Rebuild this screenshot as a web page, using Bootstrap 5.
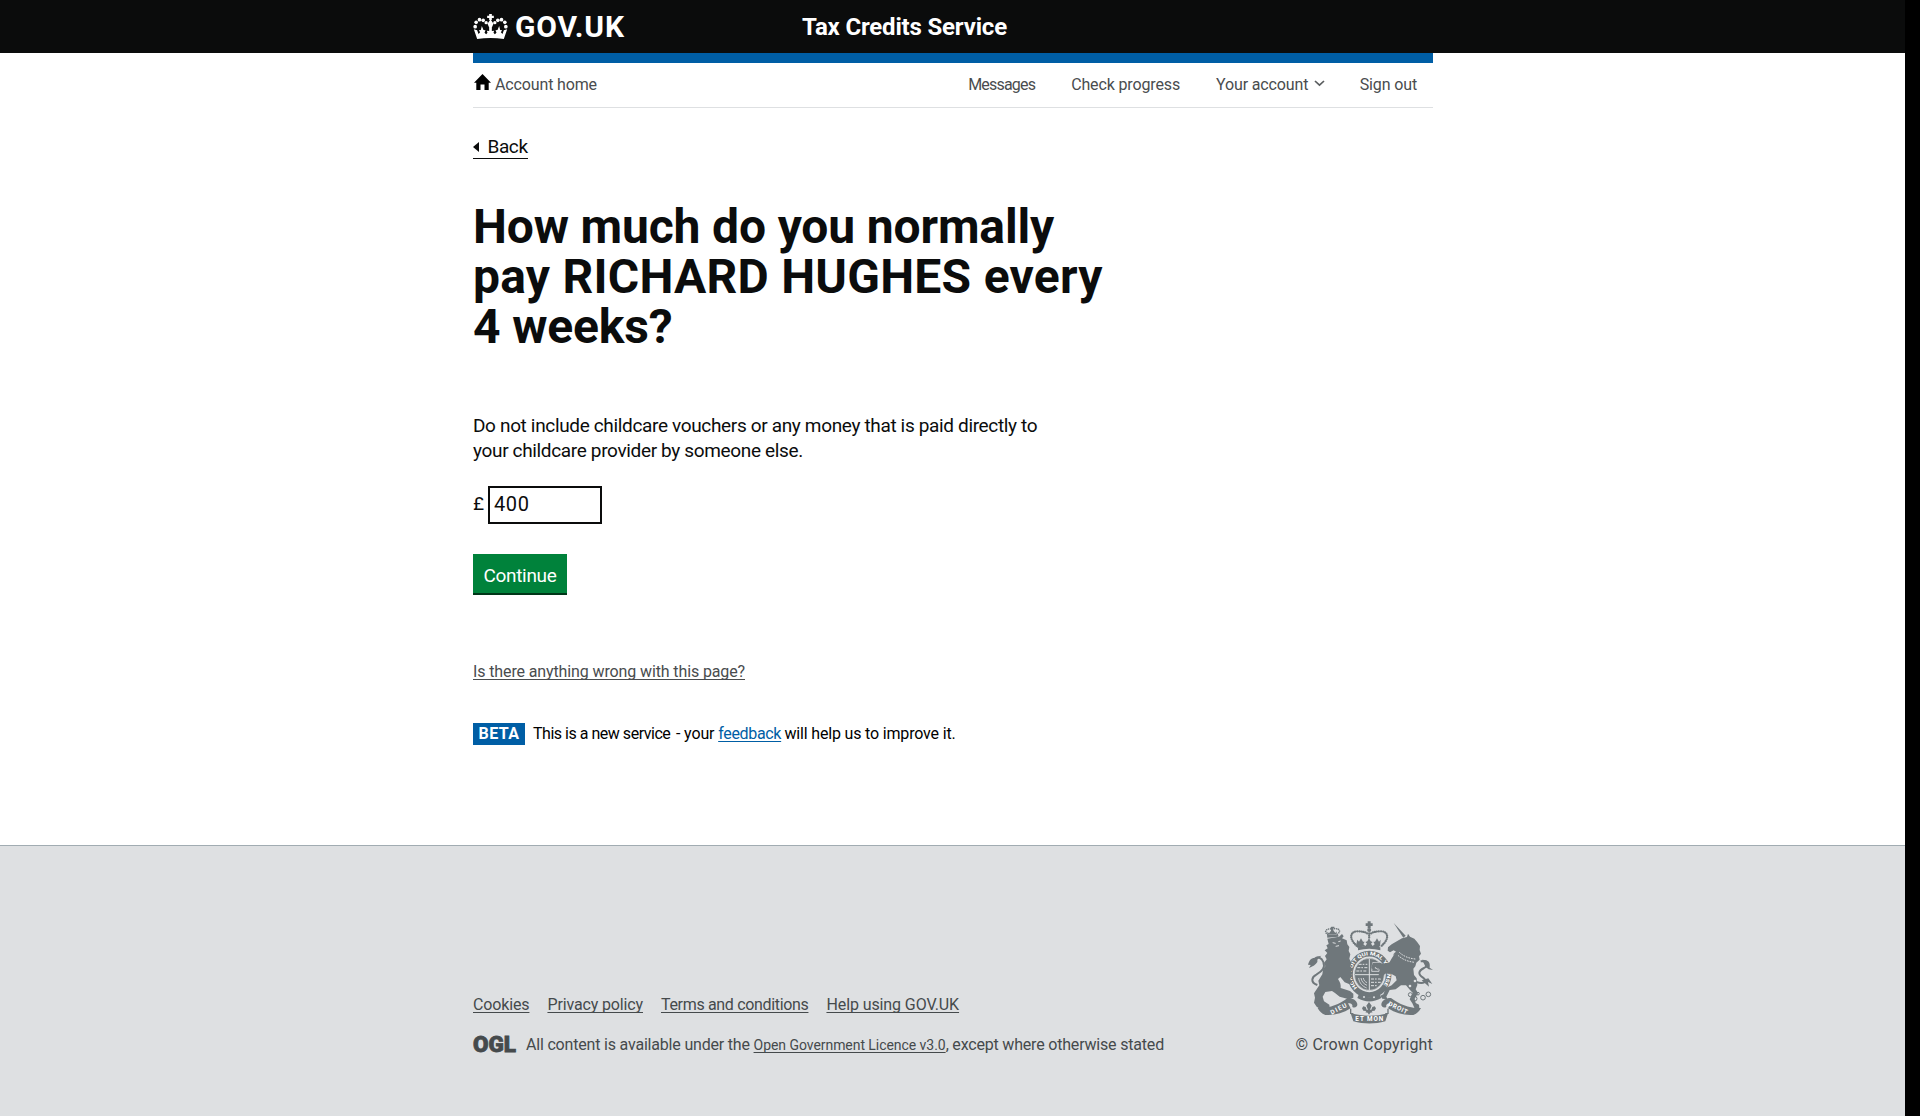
<!DOCTYPE html>
<html lang="en">
<head>
<meta charset="utf-8">
<meta name="viewport" content="width=device-width, initial-scale=1">
<title>Tax Credits Service</title>
<link href="https://cdn.jsdelivr.net/npm/bootstrap@5.3.0/dist/css/bootstrap.min.css" rel="stylesheet">
<style>
  body { background: #000; color: #0b0c0c; font: 400 16px/20px Roboto, "Liberation Sans", sans-serif; letter-spacing: -.14px; }
  .page { width: calc(100% - 15px); min-height: 1116px; }
  .wrap { width: 960px; margin: 0 0 0 calc(50% - 479.5px); }
  .site-header { background: #0b0c0c; height: 53px; color: #fff; font-weight: 700; }
  .brand { width: 329px; font-size: 30px; line-height: 36px; letter-spacing: .85px; gap: 7px; }
  .service-name { font-size: 24px; line-height: 30px; letter-spacing: -.18px; }
  .account-nav { border-top: 10px solid #005ea5; border-bottom: 1px solid #dee0e2; height: 55px; padding: 9px 16px 0 0; line-height: 25px; }
  .account-nav a { color: #494c4e; text-decoration: none; }
  .account-links { gap: 36px; }
  .chevron { margin: 8px -1px 0 5.5px; }
  .home-icon { margin: 2px 4px 0 1px; }
  .tight-8 { letter-spacing: -.8px; }
  .back-link { margin-top: 26px; height: 25px; padding-top: 1px; font-size: 19px; line-height: 23px; letter-spacing: -.4px; color: #0b0c0c; border-bottom: 1px solid #0b0c0c; text-decoration: none; gap: 8.5px; }
  .question { margin: 43px 0 0; width: 640px; font-size: 48px; line-height: 50px; font-weight: 700; letter-spacing: -.15px; }
  .question .wide-line { letter-spacing: .26px; }
  .hint { margin: 61px 0 0; width: 600px; font-size: 19px; line-height: 25px; letter-spacing: -.345px; }
  .amount { margin-top: 23px; font-size: 19px; gap: 4px; }
  .amount .form-control { width: 114px; height: 38px; padding: 0 4px 3px; border: 2px solid #0b0c0c; border-radius: 0; font-size: 20px; letter-spacing: .7px; color: #0b0c0c; }
  .amount label { padding-bottom: 2px; }
  .btn-continue { margin-top: 30px; padding: 9px 10px 5px; border: 0; border-radius: 0; background: #00823b; color: #fff; box-shadow: 0 2px 0 #003618; font-size: 19px; line-height: 25px; letter-spacing: -.32px; width: 94px; white-space: nowrap; }
  .help-link { margin-top: 69px; color: #494c4e; letter-spacing: -.12px; }
  .page a.ul { text-decoration: underline 1px; text-underline-offset: 2px; text-decoration-skip-ink: none; }
  .beta-bar { margin-top: 41px; line-height: 22px; color: #000; }
  .beta-tag { width: 52px; background: #005ea5; color: #fff; font-weight: 700; letter-spacing: .45px; text-align: center; margin-right: 8px; }
  .beta-lead { letter-spacing: -.48px; margin-right: -2px; }
  .beta-bar .feedback { color: #005ea5; letter-spacing: -.32px; }
  .beta-tail { margin-left: -.5px; letter-spacing: -.17px; }
  .site-footer { background: #dee0e2; border-top: 1px solid #a1acb2; color: #454a4c; padding-bottom: 61px; height: 271px; }
  .site-footer a { color: #454a4c; }
  .footer-links { gap: 18px; margin-bottom: 20px; }
  .licence { letter-spacing: -.19px; }
  .licence a { font-size: 14px; letter-spacing: -.05px; }
  .crest { margin-bottom: 11px; }
  .copyright { letter-spacing: .17px; }
  .crest text, .ogl text { font-family: Roboto, sans-serif; font-weight: 700; letter-spacing: 0; }
  .ogl text { font-weight: 900; }
  .ogl { overflow: visible; }
</style>
</head>
<body>
<div class="page bg-white d-flex flex-column">
  <header class="site-header">
    <div class="wrap h-100 d-flex align-items-center">
      <div class="brand d-flex align-items-center">
        <svg width="35" height="25" viewBox="24 24 104 75" fill="#fff" aria-hidden="true">
          <path d="M72 24h8v5h6v7h-6v6h-8v-6h-6v-7h6zM76 40l9 13-6 14h-6l-6-14z"/>
          <circle cx="63" cy="50" r="5"/><circle cx="89" cy="50" r="5"/>
          <circle cx="54" cy="43" r="5.500"/><circle cx="98" cy="43" r="5.500"/>
          <circle cx="43" cy="41" r="5.500"/><circle cx="109" cy="41" r="5.500"/>
          <circle cx="33" cy="49" r="5.500"/><circle cx="119" cy="49" r="5.500"/>
          <circle cx="30" cy="62" r="5.500"/><circle cx="122" cy="62" r="5.500"/>
          <path d="M26 70l10 3 4 11 5-5-4-6 6-1 3-12 5 12 6 1-3 7 5 5 4-5-2-6 7 1v-10h8v10l7-1-2 6 4 5 5-5-3-7 6-1 5-12 3 12 6 1-4 6 5 5 4-11 10-3-10 29c-26-4-54-4-80 0z"/>
        </svg>
        <span>GOV.UK</span>
      </div>
      <div class="service-name">Tax Credits Service</div>
    </div>
  </header>

  <main class="wrap flex-grow-1 d-flex flex-column align-items-start">
    <nav class="account-nav d-flex align-items-start justify-content-between align-self-stretch">
      <a href="#" class="d-flex align-items-start">
        <svg class="home-icon" width="17" height="16" viewBox="0 0 17 16" aria-hidden="true"><path d="M8.500 0L17 8.800h-2.300V16h-4.200v-5.500h-4V16H2.300V8.800H0z" fill="#000"/></svg>
        Account home
      </a>
      <div class="account-links d-flex">
        <a href="#" class="tight-8">Messages</a>
        <a href="#">Check progress</a>
        <a href="#" class="d-flex align-items-start">Your account <svg width="11" height="7" viewBox="0 0 11 7" class="chevron" fill="none" stroke="#5a5d5f" stroke-width="1.700" aria-hidden="true"><path d="M1 1l4.500 4.200L10 1"/></svg></a>
        <a href="#">Sign out</a>
      </div>
    </nav>

    <a href="#" class="back-link d-flex align-items-center">
      <svg width="6" height="10" viewBox="0 0 6 10" aria-hidden="true"><path d="M6 0v10L0 5z" fill="#0b0c0c"/></svg>
      Back
    </a>

    <h1 class="question">How much do you normally<br><span class="wide-line">pay RICHARD HUGHES every</span><br>4 weeks?</h1>

    <p class="hint">Do not include childcare vouchers or any money that is paid directly to<br>your childcare provider by someone else.</p>

    <div class="amount d-flex align-items-center">
      <label for="amount">£</label>
      <input id="amount" class="form-control" type="text" value="400">
    </div>
    <button type="button" class="btn btn-continue">Continue</button>

    <a href="#" class="help-link ul">Is there anything wrong with this page?</a>

    <div class="beta-bar d-flex">
      <strong class="beta-tag">BETA</strong>
      <span><span class="beta-lead">This is a new service</span>&nbsp; - your <a href="#" class="ul feedback">feedback</a><span class="beta-tail"> will help us to improve it.</span></span>
    </div>
  </main>

  <footer class="site-footer">
    <div class="wrap h-100 d-flex align-items-end justify-content-between">
      <div>
        <div class="footer-links d-flex">
          <a href="#" class="ul">Cookies</a>
          <a href="#" class="ul">Privacy policy</a>
          <a href="#" class="ul" style="letter-spacing:-.33px">Terms and conditions</a>
          <a href="#" class="ul" style="letter-spacing:-.1px">Help using GOV.UK</a>
        </div>
        <div class="licence d-flex">
          <svg class="ogl" width="53" height="18" viewBox="0 0 53 18" aria-label="OGL"><text x="0" y="16.500" font-size="22" textLength="43" lengthAdjust="spacingAndGlyphs" fill="#454a4c" stroke="#454a4c" stroke-width=".8">OGL</text></svg>
          <span>All content is available under the <a href="#" class="ul">Open Government Licence v3.0</a>, except where otherwise stated</span>
        </div>
      </div>
      <div class="d-flex flex-column align-items-end">
        <svg class="crest" width="125" height="103" viewBox="84 62 375 309" fill="#6f777b" role="img" aria-label="Royal coat of arms">
          <!-- imperial crown -->
          <path d="M263 63h9v6h6v8h-6v7h-9v-7h-6v-8h6z"/><circle cx="267.500" cy="89" r="6"/>
          <g fill="none" stroke="#6f777b" stroke-width="7" stroke-linecap="round" stroke-dasharray="0 6"><path d="M230 136c-24-20-21-44 4-43 14 0 26 3 31 9"/><path d="M305 136c24-20 21-44-4-43-14 0-26 3-31 9M267.500 99v18"/></g>
          <path d="M232 118l5 6 6-10 6 10 5 0-4 8 6 5 5-7-5-5 6-2 5-10 5 10 6 2-5 5 5 7 6-5-4-8 5 0 6-10 6 10 5-6-2 18-4 6c-22-5-42-5-64 0l-4-6z"/>
          <path d="M234 141c22-6 45-6 67 0v9c-22-6-45-6-67 0z"/>
          <!-- garter and shield -->
          <ellipse cx="268" cy="222" rx="58" ry="62" fill="none" stroke="#6f777b" stroke-width="17"/>
          <ellipse cx="268" cy="222" rx="45" ry="48" stroke="#dee0e2" stroke-width="1.500"/>
          <path d="M268 175v94M225 223h86" stroke="#dee0e2" stroke-width="3"/>
          <g stroke="#dee0e2" stroke-width="3" stroke-dasharray="9 3 5 4" fill="none"><path d="M236 192h26M232 202h30M229 212h33M273 236h33M273 246h29M273 256h20"/></g>
          <path d="M278 187h19v26h-22zM283 193l10 4-9 5 10 5M236 233c2 16 12 25 24 30M243 233c2 12 9 18 18 22M250 233c1 7 5 11 11 14" fill="none" stroke="#dee0e2" stroke-width="2.500"/>
          <path id="garter-arc" d="M232 262A53 56 0 1 1 304 262" fill="none"/>
          <text font-size="15" style="fill:#fff"><textPath href="#garter-arc" textLength="252" lengthAdjust="spacingAndGlyphs">HONI SOIT QUI MAL Y PENSE</textPath></text>
          <path d="M237 281c20 13 42 13 62 0l5 12c-24 14-48 14-72 0z"/><circle cx="252" cy="290" r="3" fill="#dee0e2"/><circle cx="282" cy="291" r="3" fill="#dee0e2"/>
          <!-- lion -->
          <g fill="none" stroke="#6f777b" stroke-width="5" stroke-linecap="round" stroke-dasharray="0 6"><path d="M143 103c-10-8-8-18 10-17M172 102c11-8 8-18-9-17"/></g>
          <path d="M154 79h9v5h-3v6l6 8 4-5v9l-28 1v-9l5 5 6-8v-6h-4z"/>
          <path d="M141 105c12-3 24-3 34-1v5l-33 3z"/>
          <path d="M142 115l35-6 9-8 5 7-5 6 14 6 2 12 6 8-2 12 5 10-3 13 6 13-3 10 8 11-7 7 5 12-7 8 7 7-8 9-15-6-13-16-7 6c7 10 9 18 8 27l28 9 10 8 0 12-13 5-28-8-14-11-9-6-20 3-8 14 4 14 16 10 1 10-24 6-15-10-8-12 3-15-3-13 16-24-3-14 12-19 2-14 7-11-4-9 8-11-5-10 7-9-8-8 9-6-4-9 7-4z"/>
          <path d="M158 127l9 2M175 124l7-2M167 138l10-2" stroke="#dee0e2" stroke-width="3"/>
          <path d="M112 254c-22-8-17-24-3-31 19-11 27-21 21-38-5-13-17-18-28-8" fill="none" stroke="#6f777b" stroke-width="6"/>
          <path d="M84 193c4-12 8-20 20-20 8-1 9 6 8 12-4 8-14 14-25 18l5-9zM107 170l17-4-12 12z"/>
          <!-- unicorn -->
          <path d="M341 68l36 38-7 6z"/>
          <path d="M366 114l15-4 3-10 6 9 13 6 9 11 8 11-1 12 4 11-6 8 2 10-10 9-3 11-6 7 2 19 8 10 2 20-5 13 7 11-10 17 3 13 10 5 1 10-13 4-8-18-8-12 9-20-8-8-12-14-15 0-16 12-18 2-10 20 4 8-16-2-6-9 9-4 8-19 17-8 15-15-3-12-18-10-14 2-13 15-7-10 8-14-9-9-9-3-3 11-8-7 4-15 23-1 16 8 12-10 5-9 14-22-7-4-11 6-7-5 1-10 11-9z"/>
          <path d="M358 156c14 13 29 18 48 20M354 165c14 13 31 19 50 21" stroke="#dee0e2" stroke-width="3" stroke-dasharray="5 3" fill="none"/>
          <path d="M409 245c23 8 35-3 20-13-16-11-14-20 3-29 17-10 13-23-10-20" fill="none" stroke="#6f777b" stroke-width="6"/><path d="M426 178c21 0 25 8 23 24l10 7-13-2-9-7zM425 240l22 19-3-14 13 6-12-17z"/>
          <g fill="none" stroke="#6f777b" stroke-width="3"><circle cx="348" cy="163" r="6"/><circle cx="342" cy="205" r="6"/><circle cx="391" cy="283" r="6"/><circle cx="404" cy="295" r="7"/><circle cx="414" cy="280" r="4"/><circle cx="429" cy="292" r="7"/><circle cx="445" cy="282" r="7"/></g>
          <circle cx="410" cy="217" r="4" fill="#dee0e2"/><circle cx="405" cy="242" r="4" fill="#dee0e2"/><circle cx="390" cy="257" r="4" fill="#dee0e2"/>
          <!-- motto ribbon -->
          <path d="M113 323c34 2 62-10 90-30 12-1 27 6 29 18 1 9-8 13-15 9 2-9-5-12-13-11l8 15c-24 15-48 22-76 20-12-4-18-12-23-21z"/>
          <path d="M423 323c-34 2-62-10-90-30-12-1-27 6-29 18-1 9 8 13 15 9-2-9 5-12 13-11l-8 15c24 15 48 22 76 20 12-4 18-12 23-21z"/>
          <path d="M212 339c38 10 74 10 112 0l-8 24c-32 9-64 9-96 0z"/>
          <path d="M212 325l0 14 8 1M324 325l0 14-8 1" fill="none" stroke="#6f777b" stroke-width="4"/>
          <!-- fleur-de-lis -->
          <path d="M267 305l8 11-5 12h4l3-8 7-2 4 6-4 7-9 1 3 4-7 1-4 6-4-6-7-1 3-4-9-1-4-7 4-6 7 2 3 8h4l-5-12z"/>
          <g font-size="19" style="fill:#fff"><text transform="translate(155 343) rotate(-27)" textLength="52">DIEU</text><text x="226" y="363" textLength="84">ET MON</text><text transform="translate(323 315) rotate(25)" textLength="62">DROIT</text></g>
        </svg>
        <div class="copyright">© Crown Copyright</div>
      </div>
    </div>
  </footer>
</div>
<script src="https://cdn.jsdelivr.net/npm/bootstrap@5.3.0/dist/js/bootstrap.bundle.min.js"></script>
</body>
</html>
